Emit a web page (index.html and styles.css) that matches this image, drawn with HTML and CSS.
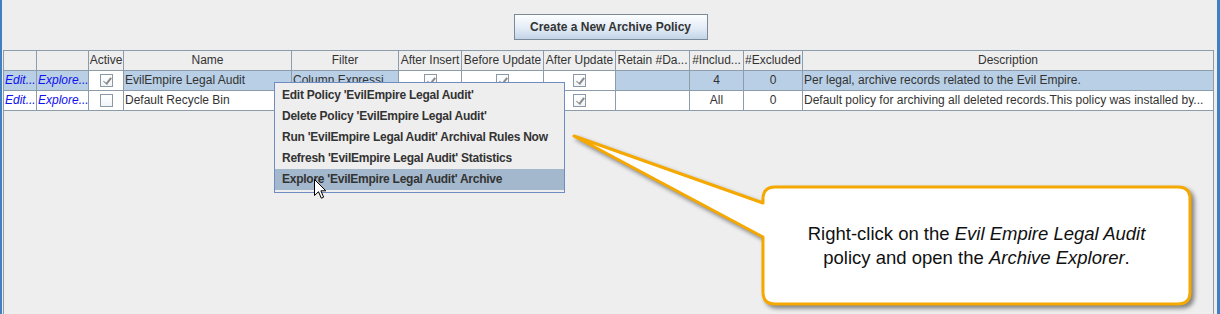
FILE: index.html
```html
<!DOCTYPE html>
<html lang="en">

<head>
  <meta charset="UTF-8">
  <title>Archive Policies</title>
  <link rel="stylesheet" href="styles.css">
</head>

<body>
  <div class="window">
    <div class="toolbar">
      <button class="btn">Create a New Archive Policy</button>
    </div>

    <div class="pane">
      <div class="grid">
        <!-- header -->
        <div class="c th"></div>
        <div class="c th"></div>
        <div class="c th">Active</div>
        <div class="c th">Name</div>
        <div class="c th">Filter</div>
        <div class="c th">After Insert</div>
        <div class="c th">Before Update</div>
        <div class="c th">After Update</div>
        <div class="c th">Retain #Da...</div>
        <div class="c th">#Includ...</div>
        <div class="c th">#Excluded</div>
        <div class="c th last">Description</div>

        <!-- row 1 (selected) -->
        <div class="c sel link">Edit...</div>
        <div class="c sel link">Explore...</div>
        <div class="c box"><span class="cb on"></span></div>
        <div class="c sel">EvilEmpire Legal Audit</div>
        <div class="c sel">Column Expressi</div>
        <div class="c box"><span class="cb on"></span></div>
        <div class="c box"><span class="cb on"></span></div>
        <div class="c box"><span class="cb on"></span></div>
        <div class="c sel"></div>
        <div class="c sel num">4</div>
        <div class="c sel num">0</div>
        <div class="c sel last">Per legal, archive records related to the Evil Empire.</div>

        <!-- row 2 -->
        <div class="c link">Edit...</div>
        <div class="c link">Explore...</div>
        <div class="c box"><span class="cb"></span></div>
        <div class="c">Default Recycle Bin</div>
        <div class="c"></div>
        <div class="c box"><span class="cb on"></span></div>
        <div class="c box"><span class="cb on"></span></div>
        <div class="c box"><span class="cb on"></span></div>
        <div class="c"></div>
        <div class="c num">All</div>
        <div class="c num">0</div>
        <div class="c last">Default policy for archiving all deleted records.This policy was installed by...</div>
      </div>
    </div>
  </div>

  <div class="menu">
    <div class="item">Edit Policy 'EvilEmpire Legal Audit'</div>
    <div class="item">Delete Policy 'EvilEmpire Legal Audit'</div>
    <div class="item">Run 'EvilEmpire Legal Audit' Archival Rules Now</div>
    <div class="item">Refresh 'EvilEmpire Legal Audit' Statistics</div>
    <div class="item hover">Explore 'EvilEmpire Legal Audit' Archive</div>
  </div>

  <svg class="pointer" viewBox="0 0 12 20">
    <path d="M.5 .5V16.5L4.5 12.7L7.3 19.2L9.6 18.2L6.9 11.8H11.8Z" fill="#fff" stroke="#000" stroke-width="1"
      stroke-linejoin="round" />
  </svg>

  <div class="callout">
    <svg viewBox="0 0 650 194">
      <path d="M215 67H618Q630 67 630 79V172Q630 184 618 184H215Q203 184 203 172V117L14 16L203 83V79Q203 67 215 67Z"
        fill="#fff" stroke="#f5a800" stroke-width="3" stroke-linejoin="round" />
    </svg>
    <div class="note">
      <p>Right-click on the <i>Evil Empire Legal Audit</i><br>policy and open the <i>Archive Explorer</i>.</p>
    </div>
  </div>
</body>

</html>
```

FILE: styles.css
```css
* {
  box-sizing: border-box;
  margin: 0;
  padding: 0
}

:root {
  --bg: #eeeeee;
  --grid: #8d9cab;
  --text: #333333;
  --sel: #b8cfe5;
  --frame: #3f7fc2;
  --orange: #f5a800
}

body {
  background: var(--bg);
  color: var(--text);
  font-family: "Liberation Sans", Arial, sans-serif;
  font-size: 12px;
  width: 1220px;
  height: 314px;
  overflow: hidden;
  position: relative
}

.window {
  height: 314px;
  border-left: 2px solid var(--frame);
  border-right: 3px solid var(--frame);
  display: flex;
  flex-direction: column;
  padding-top: 14px;
  gap: 10px
}

.toolbar {
  display: flex;
  justify-content: center;
  padding-left: 2px
}

.btn {
  width: 194px;
  height: 26px;
  border: 1px solid #7a8a99;
  background: linear-gradient(#fdfeff, #e3ecf6 55%, #c3d4e7);
  font-family: inherit;
  font-size: 12px;
  font-weight: bold;
  color: var(--text)
}

.pane {
  margin-left: 1px;
  width: 1211px;
  flex: 1;
  border: 1px solid var(--grid);
  border-bottom: none
}

.grid {
  display: grid;
  grid-template-columns: 33px 52px 35px 168px 107px 63px 82px 72px 74px 54px 59px 410px;
  grid-auto-rows: 20px
}

.c {
  border-right: 1px solid var(--grid);
  border-bottom: 1px solid var(--grid);
  background: #fff;
  padding: 0 1px;
  line-height: 19px;
  white-space: nowrap;
  overflow: hidden
}

.c.last {
  border-right: none
}

.th {
  background: var(--bg);
  text-align: center;
  padding: 0
}

.sel {
  background: var(--sel)
}

.link {
  color: #1010f0;
  font-style: italic
}

.num {
  text-align: center
}

.box {
  display: flex;
  align-items: center;
  justify-content: center
}

.cb {
  width: 13px;
  height: 13px;
  border: 1px solid #8b99a7;
  background: linear-gradient(#ffffff, #f1f4f7);
  position: relative
}

.cb.on::after {
  content: "";
  position: absolute;
  left: 4px;
  top: 1px;
  width: 3px;
  height: 7px;
  border-right: 2px solid #8a8a8a;
  border-bottom: 1px solid #8a8a8a;
  transform: rotate(38deg)
}

/* context menu over the table */
.menu {
  position: absolute;
  left: 274px;
  top: 82px;
  width: 291px;
  border: 1px solid #6f8dc2;
  background: var(--bg);
  padding: 2px 0
}

.item {
  height: 21px;
  line-height: 21px;
  padding-left: 7px;
  font-weight: bold;
  letter-spacing: -.25px;
  white-space: nowrap
}

.item.hover {
  background: #a3b8cc
}

.pointer {
  position: absolute;
  left: 314px;
  top: 179px;
  width: 12px;
  height: 20px;
  overflow: visible
}

/* annotation bubble */
.callout {
  position: absolute;
  left: 560px;
  top: 120px;
  width: 650px;
  height: 194px
}

.callout svg {
  width: 650px;
  height: 194px;
  overflow: visible;
  filter: drop-shadow(3px 3px 2px rgba(0, 0, 0, .45))
}

.note {
  position: absolute;
  left: 203px;
  top: 67px;
  width: 427px;
  height: 117px;
  display: flex;
  align-items: center;
  justify-content: center
}

.note p {
  text-align: center;
  font-size: 18.5px;
  line-height: 24px;
  color: #111
}
```
